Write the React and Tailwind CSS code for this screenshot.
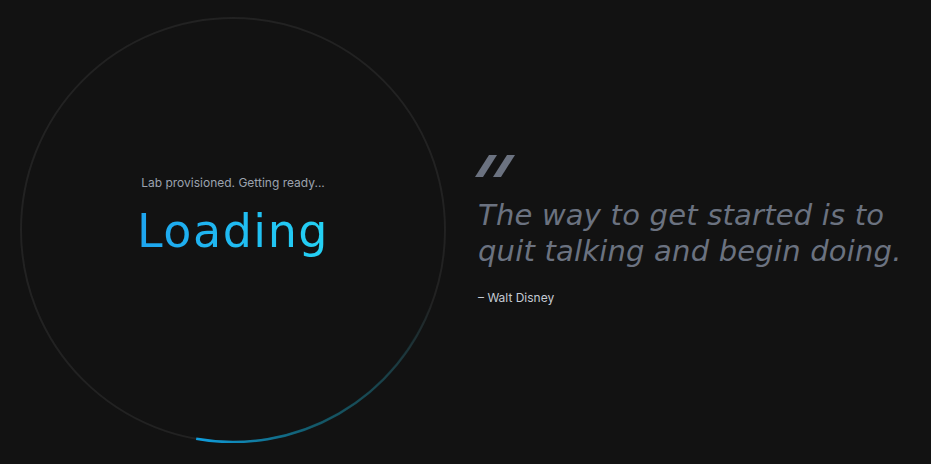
export default function App() {
  return (
    <div className="min-h-screen w-full bg-[#121212] flex items-center pl-[20px] pb-[4px] gap-[32px]">
      <div className="relative w-[426px] h-[426px] shrink-0 flex flex-col items-center justify-center">
        <svg className="absolute inset-0" width="426" height="426" viewBox="0 0 426 426" fill="none">
          <defs>
            <linearGradient id="arc" gradientUnits="userSpaceOnUse" x1="176" y1="422" x2="412" y2="286">
              <stop offset="0" stopColor="#0ea5e9" stopOpacity="0.95" />
              <stop offset="0.4" stopColor="#0891b2" stopOpacity="0.5" />
              <stop offset="1" stopColor="#06b6d4" stopOpacity="0" />
            </linearGradient>
          </defs>
          <circle cx="213" cy="213" r="212" stroke="#222222" strokeWidth="2" />
          <path d="M 176.2 421.8 A 212 212 0 0 0 412.2 285.5" stroke="url(#arc)" strokeWidth="2.5" />
        </svg>
        <div className="relative flex flex-col items-center -mt-[24px]">
          <p className="font-['Inter',sans-serif] text-[12px] leading-4 text-[#9ca3af]">
            Lab provisioned. Getting ready...
          </p>
          <h1 className="mt-[10px] font-['DejaVu_Sans',sans-serif] text-[46px] leading-[60px] font-normal tracking-[1.5px] bg-linear-to-r from-[#1ea4ef] to-[#25d2f4] bg-clip-text text-transparent">
            Loading
          </h1>
        </div>
      </div>

      <div className="flex flex-col">
        <svg width="40" height="22" viewBox="0 0 40 22" className="ml-[-3px]">
          <polygon points="14,0 22,0 8,22 0,22" fill="#6b7280" />
          <polygon points="32,0 40,0 26,22 18,22" fill="#6b7280" />
        </svg>
        <blockquote className="mt-[20px] font-['DejaVu_Sans',sans-serif] italic font-normal text-[29px] leading-[36px] tracking-[0.2px] text-[#6b7280]">
          The way to get started is to
          <br />
          quit talking and begin doing.
        </blockquote>
        <p className="mt-[21px] font-['Inter',sans-serif] text-[12px] leading-4 text-[#c4cad3]">
          – Walt Disney
        </p>
      </div>
    </div>
  );
}
